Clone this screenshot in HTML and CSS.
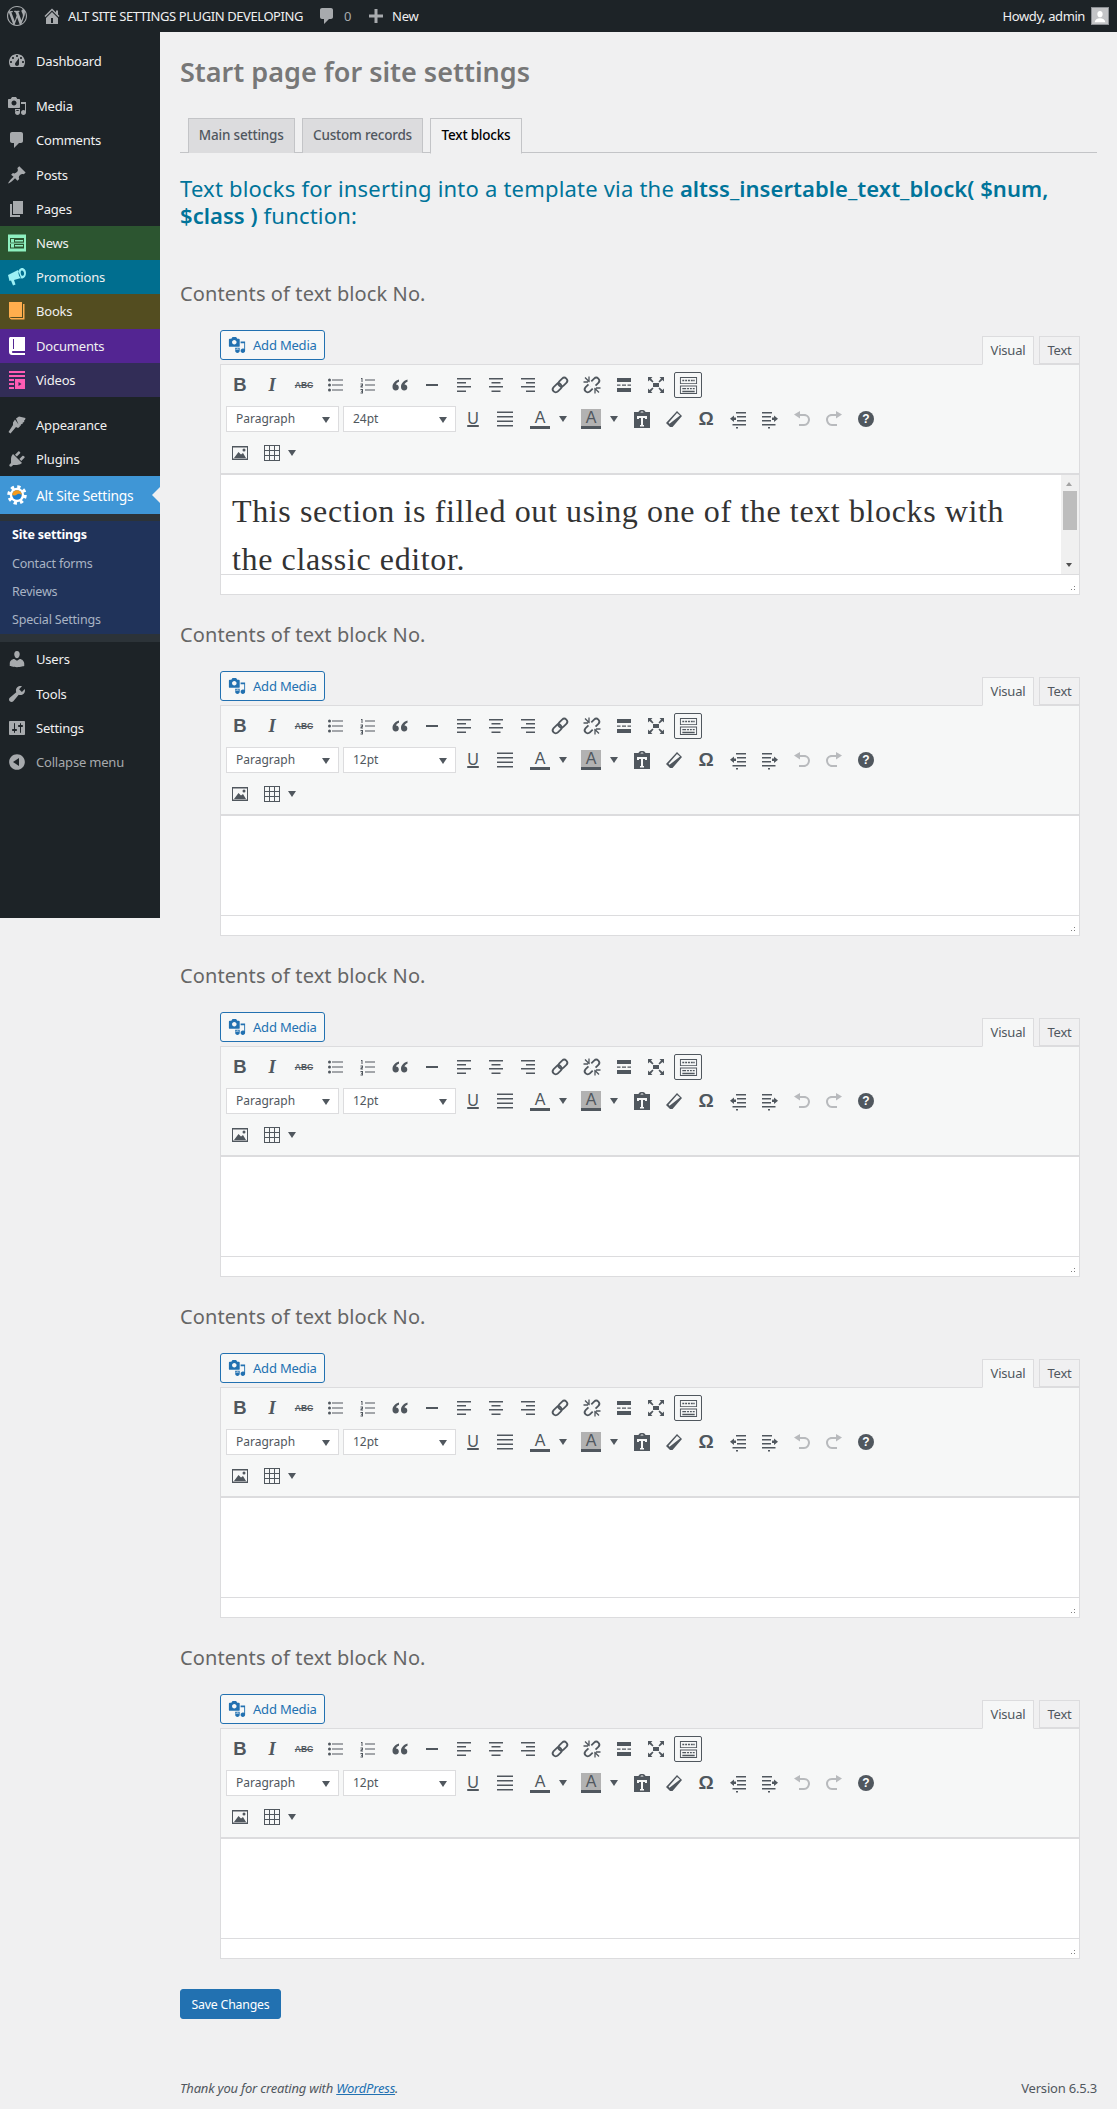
FILE: index.html
```html
<!DOCTYPE html>
<html lang="en">
<head>
<meta charset="utf-8">
<title>Start page for site settings</title>
<link rel="stylesheet" href="styles.css">
</head>
<body>
<svg class="defs" xmlns="http://www.w3.org/2000/svg">
<symbol id="wp" viewBox="0 0 20 20"><path d="M20 10c0-5.510-4.490-10-10-10C4.480 0 0 4.490 0 10c0 5.520 4.480 10 10 10 5.510 0 10-4.480 10-10zM7.780 15.370L4.370 6.220c.55-.02 1.170-.08 1.170-.08.5-.06.44-1.130-.06-1.110 0 0-1.450.11-2.370.11-.18 0-.37 0-.58-.01C4.120 2.690 6.870 1.110 10 1.110c2.330 0 4.450.87 6.050 2.340-.68-.11-1.650.39-1.650 1.580 0 .74.45 1.360.9 2.100.35.61.55 1.360.55 2.460 0 1.490-1.400 5-1.400 5l-3.030-8.370c.54-.02.82-.17.82-.17.5-.05.44-1.250-.06-1.220 0 0-1.440.12-2.380.12-.87 0-2.330-.12-2.330-.12-.5-.03-.56 1.200-.06 1.220l.92.08 1.260 3.410zM17.410 10c.24-.64.74-1.870.43-4.250.7 1.290 1.050 2.710 1.050 4.250 0 3.290-1.730 6.240-4.400 7.780.97-2.590 1.940-5.200 2.920-7.780zM6.100 18.090C3.120 16.650 1.110 13.530 1.110 10c0-1.300.23-2.480.72-3.590C3.250 10.300 4.670 14.200 6.100 18.090zm4.030-6.630l2.580 6.980c-.86.29-1.760.45-2.710.45-.79 0-1.570-.11-2.290-.33.81-2.380 1.620-4.740 2.420-7.100z"/></symbol>
<symbol id="home" viewBox="0 0 20 20"><path d="M16 8.500l1.530 1.530-1.060 1.060L10 4.620l-6.470 6.470-1.060-1.060L10 2.500l4 4v-2h2v4zm-6-2.460l6 5.990V18H4v-6.020zM11 17v-5H9v5h2z"/></symbol>
<symbol id="comment" viewBox="0 0 20 20"><path d="M5 2h9c1.100 0 2 .9 2 2v7c0 1.100-.9 2-2 2h-2l-5 5v-5H5c-1.100 0-2-.9-2-2V4c0-1.100.9-2 2-2z"/></symbol>
<symbol id="plus" viewBox="0 0 20 20"><path d="M17 8.500v3h-5.500V17h-3v-5.500H3v-3h5.500V3h3v5.500z"/></symbol>
<symbol id="dash" viewBox="0 0 20 20"><path fill-rule="evenodd" d="M3.760 16h12.480c1.100-1.370 1.760-3.110 1.760-5 0-4.420-3.580-8-8-8s-8 3.580-8 8c0 1.890.66 3.630 1.760 5zM10 4c.55 0 1 .45 1 1s-.45 1-1 1-1-.45-1-1 .45-1 1-1zM6 6c.55 0 1 .45 1 1s-.45 1-1 1-1-.45-1-1 .45-1 1-1zm8 0c.55 0 1 .45 1 1s-.45 1-1 1-1-.45-1-1 .45-1 1-1zm-5.370 5.550L12 7v6c0 1.100-.9 2-2 2s-2-.9-2-2c0-.57.24-1.080.63-1.450zM4 10c.55 0 1 .45 1 1s-.45 1-1 1-1-.45-1-1 .45-1 1-1zm12 0c.55 0 1 .45 1 1s-.45 1-1 1-1-.45-1-1 .45-1 1-1z"/></symbol>
<symbol id="media" viewBox="0 0 20 20"><path fill-rule="evenodd" d="M13 11V4c0-.55-.45-1-1-1h-1.670L9 1H5L3.670 3H2c-.55 0-1 .45-1 1v7c0 .55.45 1 1 1h10c.55 0 1-.45 1-1zM7 4.500c1.380 0 2.500 1.120 2.500 2.500S8.380 9.500 7 9.500 4.500 8.380 4.500 7 5.620 4.500 7 4.500zM14 6h5v10.500c0 1.380-1.120 2.500-2.500 2.500S14 17.880 14 16.500s1.120-2.500 2.500-2.500c.57 0 1.100.2 1.500.5V8h-4zm-6 7h5v3.500c0 1.380-1.120 2.500-2.500 2.500S8 17.880 8 16.500 9.120 14 10.500 14c.57 0 1.100.2 1.500.5V15H8z"/></symbol>
<symbol id="pin" viewBox="0 0 20 20"><path d="M10.440 3.020l1.820-1.820 6.360 6.350-1.830 1.820c-1.050-.68-2.480-.57-3.410.36l-.75.75c-.92.93-1.040 2.350-.35 3.410l-1.830 1.820-2.410-2.410-2.800 2.790c-.42.42-3.380 2.710-3.800 2.290s1.860-3.390 2.280-3.810l2.790-2.790L4.100 9.780l1.830-1.820c1.050.69 2.480.57 3.400-.36l.75-.75c.93-.92 1.050-2.350.36-3.400z"/></symbol>
<symbol id="pages" viewBox="0 0 20 20"><path d="M6 15V2h10v13H6zm-1 1h8v2H3V5h2v11z"/></symbol>
<symbol id="brush" viewBox="0 0 20 20"><path d="M9 3.500l3-2 6.500 1.500-.5 2-1 .5.300 1.500-1.500.4-.3 1.600-1.500.2-.5 1.800-1.500-.5zM8 4.500l5 7-2 1.500-2-1L3.500 18.500 1.500 17 6 10 6 7.500z"/></symbol>
<symbol id="plug" viewBox="0 0 20 20"><path d="M13.110 4.360L9.870 7.600 8 5.730l3.240-3.240c.35-.34 1.050-.2 1.560.32.520.51.66 1.210.31 1.550zm-8 1.770l.91-1.120 9.010 9.010-1.190.84c-.71.71-2.630 1.160-3.820 1.160H6.140L4.900 17.260c-.59.59-1.540.59-2.120 0-.59-.58-.59-1.530 0-2.120l1.240-1.240v-3.880c0-1.130.4-3.050 1.110-3.890zm7.260 3.970l3.240-3.240c.34-.35 1.040-.21 1.550.31.52.51.66 1.210.31 1.550l-3.240 3.250z"/></symbol>
<symbol id="user" viewBox="0 0 20 20"><path d="M10 9.250c-2.270 0-2.730-3.440-2.730-3.440C7 4.020 7.820 2 9.970 2c2.160 0 2.980 2.020 2.710 3.810 0 0-.41 3.440-2.680 3.440zm0 2.570L12.720 10c2.390 0 4.520 2.330 4.520 4.530v2.490s-3.650 1.130-7.240 1.130c-3.650 0-7.240-1.130-7.240-1.130v-2.490c0-2.250 1.940-4.480 4.470-4.480z"/></symbol>
<symbol id="wrench" viewBox="0 0 20 20"><path d="M16.680 9.770c-1.340 1.340-3.300 1.670-4.950.99l-5.410 6.520c-.99.99-2.590.99-3.570 0-.99-.98-.99-2.580 0-3.570l6.520-5.420c-.68-1.650-.35-3.610.99-4.950 1.280-1.280 3.120-1.620 4.720-1.060l-2.890 2.890 2.820 2.820 2.860-2.870c.53 1.580.18 3.400-1.090 4.670z"/></symbol>
<symbol id="sliders" viewBox="0 0 20 20"><path fill-rule="evenodd" d="M18 16V4c0-.55-.45-1-1-1H3c-.55 0-1 .45-1 1v12c0 .55.45 1 1 1h14c.55 0 1-.45 1-1zM8 11h1c.55 0 1 .45 1 1s-.45 1-1 1H8v1.500c0 .28-.22.5-.5.5s-.5-.22-.5-.5V13H6c-.55 0-1-.45-1-1s.45-1 1-1h1V5.500c0-.28.22-.5.5-.5s.5.22.5.5V11zm5-2h-1c-.55 0-1-.45-1-1s.45-1 1-1h1V5.500c0-.28.22-.5.5-.5s.5.22.5.5V7h1c.55 0 1 .45 1 1s-.45 1-1 1h-1v5.500c0 .28-.22.5-.5.5s-.5-.22-.5-.5V9z"/></symbol>
<symbol id="collapse" viewBox="0 0 20 20"><path fill-rule="evenodd" d="M10 2.160c4.330 0 7.840 3.510 7.840 7.840s-3.510 7.840-7.840 7.840-7.840-3.510-7.840-7.840S5.670 2.160 10 2.160zm2 11.840V6l-6 4z"/></symbol>
<symbol id="news" viewBox="0 0 20 20"><path fill="#8ef0c0" fill-rule="evenodd" d="M1 1.500h18v17H1zM3 5v10.500h14V5zM4 6h3v3.500H4zM8 7h8v1.500H8zM4 11h3v3.500H4zM8 12h8v1.500H8z"/><path fill="#8ef0c0" d="M3 9.700h14v1H3z"/></symbol>
<symbol id="promo" viewBox="0 0 20 20"><path fill="#9cf0f5" fill-rule="evenodd" d="M1 8l10-5 3 8-7 2 1.500 4.500-2.500 1L4 13.500l-1.500.5zM14.500 1c2.500-.5 4.500 2 4.500 5s-1.500 5-3.500 5.500c-2 .3-3.500-2-4-5S12.500 1.500 14.500 1zm.3 2.500c-1 .2-1.300 1.500-1 3s1 2.500 2 2.300 1.500-1.500 1.200-3-1.200-2.500-2.200-2.300z"/></symbol>
<symbol id="book" viewBox="0 0 20 20"><path fill="#ffae4d" d="M2 1h13v15H5c-1.700 0-3 1-3 1zM16 3h1.500v15.500H4.500c-1-.2-1.700-.7-1.800-1.200.5-.4 1.500-.3 2.300-.3H16z"/></symbol>
<symbol id="doc" viewBox="0 0 20 20"><path fill="#fff" fill-rule="evenodd" d="M3 1h15v14H6c-1.500 0-1.500 2 0 2h12v2H5c-1.500 0-3-1-3-3V3c0-1 .5-2 1-2zM6 3v10h1V3z"/></symbol>
<symbol id="video" viewBox="0 0 20 20"><path fill="#ff5cb4" fill-rule="evenodd" d="M2 1h16v2H2zM2 5h16v2H2zM2 9h5v2H2zM2 13h5v2H2zM2 17h5v2H2zM8 9h10v10H8zM11.500 12v4l3-2z"/></symbol>
<symbol id="ul" viewBox="0 0 20 20"><path d="M6 4.500h11v1H6zM6 9.500h11v1H6zM6 14.500h11v1H6z"/><circle cx="3.500" cy="5" r="1.500"/><circle cx="3.500" cy="10" r="1.500"/><circle cx="3.500" cy="15" r="1.500"/></symbol>
<symbol id="ol" viewBox="0 0 20 20"><path d="M7 4.500h10v1H7zM7 9.500h10v1H7zM7 14.500h10v1H7zM3 3h1.500v4h-1V4H3zM2.500 8.500H5v2.200l-1.500.8H5v1H2.500v-1.800l1.500-.8v-.4H2.500zM2.500 14H5v4.500H2.500v-1H4V17H3v-.8h1v-1H2.500z"/></symbol>
<symbol id="quote" viewBox="0 0 20 20"><path d="M9 4.500C5.500 5.500 2.500 8 2.500 12c0 2.200 1.300 3.500 3.200 3.500 1.800 0 3.100-1.300 3.100-3s-1.200-2.800-2.800-2.900C6.200 8.200 7.300 7.300 9 6.700zM17.500 4.500C14 5.500 11 8 11 12c0 2.200 1.300 3.500 3.200 3.500 1.800 0 3.100-1.300 3.100-3s-1.200-2.800-2.800-2.900c.2-1.400 1.300-2.300 3-2.900z"/></symbol>
<symbol id="hr" viewBox="0 0 20 20"><path d="M4 9h12v2H4z"/></symbol>
<symbol id="al" viewBox="0 0 20 20"><path d="M3 3h14v1.500H3zM3 7h9v1.500H3zM3 11h14v1.500H3zM3 15.500h9V17H3z"/></symbol>
<symbol id="ac" viewBox="0 0 20 20"><path d="M3 3h14v1.500H3zM5.500 7h9v1.500h-9zM3 11h14v1.500H3zM5.500 15.500h9V17h-9z"/></symbol>
<symbol id="ar" viewBox="0 0 20 20"><path d="M3 3h14v1.500H3zM8 7h9v1.500H8zM3 11h14v1.500H3zM8 15.500h9V17H8z"/></symbol>
<symbol id="link" viewBox="0 0 20 20"><g fill="none" stroke="currentColor" stroke-width="1.800"><rect x="1" y="7" width="10" height="6" rx="3" transform="rotate(-45 10 10)"/><rect x="9" y="7" width="10" height="6" rx="3" transform="rotate(-45 10 10)"/></g></symbol>
<symbol id="unlink" viewBox="0 0 20 20"><g fill="none" stroke="currentColor" stroke-width="1.800"><rect x="1" y="7" width="10" height="6" rx="3" transform="rotate(-45 10 10)"/><rect x="9" y="7" width="10" height="6" rx="3" transform="rotate(-45 10 10)"/></g><path fill="none" stroke="#f6f7f7" stroke-width="4" d="M4.500 4.500L15.500 15.500"/><path fill="none" stroke="currentColor" stroke-width="1.300" d="M3 2.500L7.500 7M1.500 7H6M7 1.500V6M17 17.500L12.500 13M18.500 13H14M13 18.500V14"/></symbol>
<symbol id="more" viewBox="0 0 20 20"><path d="M3 3h14v4H3zM3 13h14v4H3zM3 9.500h3.500v1.200H3zM8 9.500h4v1.200H8zM13.500 9.500H17v1.200h-3.500z"/></symbol>
<symbol id="full" viewBox="0 0 20 20"><path d="M7 8h6v4H7zM2 2h4.500L5 3.500 7.500 6.500 6.500 7.500 3.500 5 2 6.500zM18 2h-4.500L15 3.500l-2.500 3 1 1 3-2.500L18 6.500zM2 18h4.500L5 16.500l2.500-3-1-1-3 2.500L2 13.500zM18 18h-4.500l1.500-1.500-2.500-3 1-1 3 2.500 1.500-1.500z"/></symbol>
<symbol id="kitchen" viewBox="0 0 20 20"><path fill-rule="evenodd" d="M1 1h18v7.500H1zM2 2v5.500h16V2zM1 10h18v9H1zM2 11v7h16v-7z"/><path d="M3.500 4h2v1.500h-2zM6.500 4h2v1.500h-2zM9.500 4h2v1.500h-2zM12.500 4h2v1.500h-2zM15 4h1.500v1.500H15zM3.500 12.500h4V14h-4zM8.500 12.500h2V14h-2zM11.500 12.500h2V14h-2zM14.500 12.500h2V14h-2zM3.500 15.500h13V17h-13z"/></symbol>
<symbol id="just" viewBox="0 0 20 20"><path d="M2 2.500h16V4H2zM2 7h16v1.500H2zM2 11.500h16V13H2zM2 16h16v1.500H2z"/></symbol>
<symbol id="paste" viewBox="0 0 20 20"><path fill-rule="evenodd" d="M2 3h4.500C7 1.500 8.200 1 10 1s3 .5 3.500 2H18v16H2zM8.500 3.500h3C11.300 2.700 10.800 2.500 10 2.500s-1.300.2-1.500 1zM5 7v3h2V9h2v7H8v1.500h4V16h-1V9h2v1h2V7z"/></symbol>
<symbol id="erase" viewBox="0 0 20 20"><path fill-rule="evenodd" d="M13 2l5 5-9.500 11H6L2 14zM13 4L4.500 13.800l1 1L16 6.500z"/></symbol>
<symbol id="out" viewBox="0 0 20 20"><path d="M8 3h10v1.500H8zM9 7h9v1.500H9zM9 11h9v1.500H9zM2 9.700L6 6.500v2h2v2.500H6v2zM4.500 15h13.500v1.500H4.500zM8 18h2v1.500H8z"/></symbol>
<symbol id="ind" viewBox="0 0 20 20"><path d="M2 3h10v1.500H2zM2 7h9v1.500H2zM2 11h9v1.500H2zM18 9.700l-4-3.200v2h-2v2.500h2v2zM2 15h13.500v1.500H2zM8 18h2v1.500H8z"/></symbol>
<symbol id="undo" viewBox="0 0 20 20"><path d="M2 5.500L8 2v3h4c3.500 0 6 2.500 6 5.500S15.500 17 12 17H7v-2h5c2.300 0 4-2 4-4.500S14.300 7 12 7H8v2.500z"/></symbol>
<symbol id="redo" viewBox="0 0 20 20"><path d="M18 5.500L12 2v3H8C4.500 5 2 7.500 2 10.500S4.500 17 8 17h5v-2H8c-2.300 0-4-2-4-4.500S5.700 7 8 7h4v2.500z"/></symbol>
<symbol id="img" viewBox="0 0 20 20"><path fill-rule="evenodd" d="M2 3h16v14H2zM3 4.500v11h14v-11z"/><path d="M4 15l4.500-6 2.500 2.500 2-1.500 3 5zM14 5.500a1.500 1.500 0 1 1 0 3 1.500 1.500 0 0 1 0-3z"/></symbol>
<symbol id="table" viewBox="0 0 20 20"><path fill-rule="evenodd" d="M2 2h16v16H2zM3 3v4h4V3zM8 3v4h4V3zM13 3v4h4V3zM3 8v4h4V8zM8 8v4h4V8zM13 8v4h4V8zM3 13v4h4v-4zM8 13v4h4v-4zM13 13v4h4v-4z"/></symbol>
</svg>

<header class="adminbar">
  <div class="bar-left">
    <svg class="bar-ic bar-wp"><use href="#wp"/></svg>
    <svg class="bar-ic bar-home"><use href="#home"/></svg>
    <span class="bar-site">ALT SITE SETTINGS PLUGIN DEVELOPING</span>
    <svg class="bar-ic bar-com"><use href="#comment"/></svg>
    <span class="bar-count">0</span>
    <svg class="bar-ic bar-plus"><use href="#plus"/></svg>
    <span class="bar-new">New</span>
  </div>
  <div class="bar-right">
    <span class="bar-howdy">Howdy, admin</span>
    <span class="avatar"><svg viewBox="0 0 18 18"><path d="M9 3.500c2 0 3 1.500 3 3.500s-1.300 3.500-3 3.500S6 9 6 7s1-3.500 3-3.500zM3 16c.3-3 2.800-4.500 6-4.500s5.700 1.500 6 4.500z"/></svg></span>
  </div>
</header>

<div class="wrap">
  <nav class="sidebar">
    <ul class="menu">
      <li class="mi"><svg class="mi-ic"><use href="#dash"/></svg>Dashboard</li>
      <li class="sep"></li>
      <li class="mi"><svg class="mi-ic"><use href="#media"/></svg>Media</li>
      <li class="mi"><svg class="mi-ic"><use href="#comment"/></svg>Comments</li>
      <li class="mi"><svg class="mi-ic"><use href="#pin"/></svg>Posts</li>
      <li class="mi"><svg class="mi-ic"><use href="#pages"/></svg>Pages</li>
      <li class="mi c-news"><svg class="mi-ic"><use href="#news"/></svg>News</li>
      <li class="mi c-promo"><svg class="mi-ic"><use href="#promo"/></svg>Promotions</li>
      <li class="mi c-books"><svg class="mi-ic"><use href="#book"/></svg>Books</li>
      <li class="mi c-docs"><svg class="mi-ic"><use href="#doc"/></svg>Documents</li>
      <li class="mi c-video"><svg class="mi-ic"><use href="#video"/></svg>Videos</li>
      <li class="sep"></li>
      <li class="mi"><svg class="mi-ic"><use href="#brush"/></svg>Appearance</li>
      <li class="mi"><svg class="mi-ic"><use href="#plug"/></svg>Plugins</li>
      <li class="mi current">
        <svg class="mi-ic gear" viewBox="0 0 20 20"><circle cx="10" cy="10" r="8" fill="none" stroke="#fff" stroke-width="3.500" stroke-dasharray="3.200 3.080"/><circle cx="10" cy="10" r="7.200" fill="#fff"/><circle cx="10" cy="10" r="4.800" fill="#1c7fd0"/><path d="M5.200 10a4.800 4.800 0 0 1 9.600 0c-2-1.500-4-1.500-4.800-.6-1.200 1-3 1.300-4.800.6z" fill="#f59a1b"/></svg>
        Alt Site Settings
      </li>
      <li class="submenu">
        <ul class="sublist">
          <li class="si si-on">Site settings</li>
          <li class="si">Contact forms</li>
          <li class="si">Reviews</li>
          <li class="si">Special Settings</li>
        </ul>
      </li>
      <li class="mi"><svg class="mi-ic"><use href="#user"/></svg>Users</li>
      <li class="mi"><svg class="mi-ic"><use href="#wrench"/></svg>Tools</li>
      <li class="mi"><svg class="mi-ic"><use href="#sliders"/></svg>Settings</li>
      <li class="mi mi-dim"><svg class="mi-ic"><use href="#collapse"/></svg>Collapse menu</li>
    </ul>
  </nav>

  <main class="main">
    <h1 class="title">Start page for site settings</h1>
    <div class="navtabs">
      <span class="navtab nt-main">Main settings</span>
      <span class="navtab nt-custom">Custom records</span>
      <span class="navtab navtab-on">Text blocks</span>
    </div>
    <h2 class="lead">Text blocks for inserting into a template via the <b>altss_insertable_text_block( $num, $class )</b> function:</h2>

    <section class="block">
      <h3 class="label">Contents of text block No.</h3>
      <div class="editor">
        <div class="ed-head">
          <button class="addmedia"><svg class="am-ic"><use href="#media"/></svg>Add Media</button>
          <div class="ed-tabs"><span class="ed-tab ed-tab-on">Visual</span><span class="ed-tab">Text</span></div>
        </div>
        <div class="toolbar">
          <div class="row">
            <span class="tb t-b">B</span><span class="tb t-i">I</span><span class="tb t-abc">ABC</span>
            <span class="tb"><svg class="ic"><use href="#ul"/></svg></span><span class="tb"><svg class="ic"><use href="#ol"/></svg></span><span class="tb"><svg class="ic"><use href="#quote"/></svg></span><span class="tb"><svg class="ic"><use href="#hr"/></svg></span>
            <span class="tb"><svg class="ic"><use href="#al"/></svg></span><span class="tb"><svg class="ic"><use href="#ac"/></svg></span><span class="tb"><svg class="ic"><use href="#ar"/></svg></span>
            <span class="tb"><svg class="ic"><use href="#link"/></svg></span><span class="tb"><svg class="ic"><use href="#unlink"/></svg></span><span class="tb"><svg class="ic"><use href="#more"/></svg></span><span class="tb"><svg class="ic"><use href="#full"/></svg></span>
            <span class="tb tb-on"><svg class="ic"><use href="#kitchen"/></svg></span>
          </div>
          <div class="row">
            <span class="sel">Paragraph</span><span class="sel sel-2">24pt</span>
            <span class="tb t-u">U</span><span class="tb"><svg class="ic"><use href="#just"/></svg></span>
            <span class="split t-a">A</span><span class="caret-box"></span><span class="split t-a t-a2">A</span><span class="caret-box"></span>
            <span class="tb tb-paste"><svg class="ic"><use href="#paste"/></svg></span><span class="tb"><svg class="ic"><use href="#erase"/></svg></span><span class="tb t-o">Ω</span>
            <span class="tb"><svg class="ic"><use href="#out"/></svg></span><span class="tb"><svg class="ic"><use href="#ind"/></svg></span>
            <span class="tb tb-off"><svg class="ic"><use href="#undo"/></svg></span><span class="tb tb-off"><svg class="ic"><use href="#redo"/></svg></span>
            <span class="tb"><span class="help">?</span></span>
          </div>
          <div class="row">
            <span class="tb"><svg class="ic"><use href="#img"/></svg></span><span class="tb"><svg class="ic"><use href="#table"/></svg></span><span class="caret-box caret-sm"></span>
          </div>
        </div>
        <div class="edit edit-filled">
          <p class="edit-text">This section is filled out using one of the text blocks with the classic editor.</p>
          <div class="scroll"><span class="sc-up"></span><span class="sc-thumb"></span><span class="sc-down"></span></div>
        </div>
        <div class="status"><span class="grip"></span></div>
      </div>
    </section>

    <section class="block">
      <h3 class="label">Contents of text block No.</h3>
      <div class="editor">
        <div class="ed-head">
          <button class="addmedia"><svg class="am-ic"><use href="#media"/></svg>Add Media</button>
          <div class="ed-tabs"><span class="ed-tab ed-tab-on">Visual</span><span class="ed-tab">Text</span></div>
        </div>
        <div class="toolbar">
          <div class="row">
            <span class="tb t-b">B</span><span class="tb t-i">I</span><span class="tb t-abc">ABC</span>
            <span class="tb"><svg class="ic"><use href="#ul"/></svg></span><span class="tb"><svg class="ic"><use href="#ol"/></svg></span><span class="tb"><svg class="ic"><use href="#quote"/></svg></span><span class="tb"><svg class="ic"><use href="#hr"/></svg></span>
            <span class="tb"><svg class="ic"><use href="#al"/></svg></span><span class="tb"><svg class="ic"><use href="#ac"/></svg></span><span class="tb"><svg class="ic"><use href="#ar"/></svg></span>
            <span class="tb"><svg class="ic"><use href="#link"/></svg></span><span class="tb"><svg class="ic"><use href="#unlink"/></svg></span><span class="tb"><svg class="ic"><use href="#more"/></svg></span><span class="tb"><svg class="ic"><use href="#full"/></svg></span>
            <span class="tb tb-on"><svg class="ic"><use href="#kitchen"/></svg></span>
          </div>
          <div class="row">
            <span class="sel">Paragraph</span><span class="sel sel-2">12pt</span>
            <span class="tb t-u">U</span><span class="tb"><svg class="ic"><use href="#just"/></svg></span>
            <span class="split t-a">A</span><span class="caret-box"></span><span class="split t-a t-a2">A</span><span class="caret-box"></span>
            <span class="tb tb-paste"><svg class="ic"><use href="#paste"/></svg></span><span class="tb"><svg class="ic"><use href="#erase"/></svg></span><span class="tb t-o">Ω</span>
            <span class="tb"><svg class="ic"><use href="#out"/></svg></span><span class="tb"><svg class="ic"><use href="#ind"/></svg></span>
            <span class="tb tb-off"><svg class="ic"><use href="#undo"/></svg></span><span class="tb tb-off"><svg class="ic"><use href="#redo"/></svg></span>
            <span class="tb"><span class="help">?</span></span>
          </div>
          <div class="row">
            <span class="tb"><svg class="ic"><use href="#img"/></svg></span><span class="tb"><svg class="ic"><use href="#table"/></svg></span><span class="caret-box caret-sm"></span>
          </div>
        </div>
        <div class="edit"></div>
        <div class="status"><span class="grip"></span></div>
      </div>
    </section>

    <section class="block">
      <h3 class="label">Contents of text block No.</h3>
      <div class="editor">
        <div class="ed-head">
          <button class="addmedia"><svg class="am-ic"><use href="#media"/></svg>Add Media</button>
          <div class="ed-tabs"><span class="ed-tab ed-tab-on">Visual</span><span class="ed-tab">Text</span></div>
        </div>
        <div class="toolbar">
          <div class="row">
            <span class="tb t-b">B</span><span class="tb t-i">I</span><span class="tb t-abc">ABC</span>
            <span class="tb"><svg class="ic"><use href="#ul"/></svg></span><span class="tb"><svg class="ic"><use href="#ol"/></svg></span><span class="tb"><svg class="ic"><use href="#quote"/></svg></span><span class="tb"><svg class="ic"><use href="#hr"/></svg></span>
            <span class="tb"><svg class="ic"><use href="#al"/></svg></span><span class="tb"><svg class="ic"><use href="#ac"/></svg></span><span class="tb"><svg class="ic"><use href="#ar"/></svg></span>
            <span class="tb"><svg class="ic"><use href="#link"/></svg></span><span class="tb"><svg class="ic"><use href="#unlink"/></svg></span><span class="tb"><svg class="ic"><use href="#more"/></svg></span><span class="tb"><svg class="ic"><use href="#full"/></svg></span>
            <span class="tb tb-on"><svg class="ic"><use href="#kitchen"/></svg></span>
          </div>
          <div class="row">
            <span class="sel">Paragraph</span><span class="sel sel-2">12pt</span>
            <span class="tb t-u">U</span><span class="tb"><svg class="ic"><use href="#just"/></svg></span>
            <span class="split t-a">A</span><span class="caret-box"></span><span class="split t-a t-a2">A</span><span class="caret-box"></span>
            <span class="tb tb-paste"><svg class="ic"><use href="#paste"/></svg></span><span class="tb"><svg class="ic"><use href="#erase"/></svg></span><span class="tb t-o">Ω</span>
            <span class="tb"><svg class="ic"><use href="#out"/></svg></span><span class="tb"><svg class="ic"><use href="#ind"/></svg></span>
            <span class="tb tb-off"><svg class="ic"><use href="#undo"/></svg></span><span class="tb tb-off"><svg class="ic"><use href="#redo"/></svg></span>
            <span class="tb"><span class="help">?</span></span>
          </div>
          <div class="row">
            <span class="tb"><svg class="ic"><use href="#img"/></svg></span><span class="tb"><svg class="ic"><use href="#table"/></svg></span><span class="caret-box caret-sm"></span>
          </div>
        </div>
        <div class="edit"></div>
        <div class="status"><span class="grip"></span></div>
      </div>
    </section>

    <section class="block">
      <h3 class="label">Contents of text block No.</h3>
      <div class="editor">
        <div class="ed-head">
          <button class="addmedia"><svg class="am-ic"><use href="#media"/></svg>Add Media</button>
          <div class="ed-tabs"><span class="ed-tab ed-tab-on">Visual</span><span class="ed-tab">Text</span></div>
        </div>
        <div class="toolbar">
          <div class="row">
            <span class="tb t-b">B</span><span class="tb t-i">I</span><span class="tb t-abc">ABC</span>
            <span class="tb"><svg class="ic"><use href="#ul"/></svg></span><span class="tb"><svg class="ic"><use href="#ol"/></svg></span><span class="tb"><svg class="ic"><use href="#quote"/></svg></span><span class="tb"><svg class="ic"><use href="#hr"/></svg></span>
            <span class="tb"><svg class="ic"><use href="#al"/></svg></span><span class="tb"><svg class="ic"><use href="#ac"/></svg></span><span class="tb"><svg class="ic"><use href="#ar"/></svg></span>
            <span class="tb"><svg class="ic"><use href="#link"/></svg></span><span class="tb"><svg class="ic"><use href="#unlink"/></svg></span><span class="tb"><svg class="ic"><use href="#more"/></svg></span><span class="tb"><svg class="ic"><use href="#full"/></svg></span>
            <span class="tb tb-on"><svg class="ic"><use href="#kitchen"/></svg></span>
          </div>
          <div class="row">
            <span class="sel">Paragraph</span><span class="sel sel-2">12pt</span>
            <span class="tb t-u">U</span><span class="tb"><svg class="ic"><use href="#just"/></svg></span>
            <span class="split t-a">A</span><span class="caret-box"></span><span class="split t-a t-a2">A</span><span class="caret-box"></span>
            <span class="tb tb-paste"><svg class="ic"><use href="#paste"/></svg></span><span class="tb"><svg class="ic"><use href="#erase"/></svg></span><span class="tb t-o">Ω</span>
            <span class="tb"><svg class="ic"><use href="#out"/></svg></span><span class="tb"><svg class="ic"><use href="#ind"/></svg></span>
            <span class="tb tb-off"><svg class="ic"><use href="#undo"/></svg></span><span class="tb tb-off"><svg class="ic"><use href="#redo"/></svg></span>
            <span class="tb"><span class="help">?</span></span>
          </div>
          <div class="row">
            <span class="tb"><svg class="ic"><use href="#img"/></svg></span><span class="tb"><svg class="ic"><use href="#table"/></svg></span><span class="caret-box caret-sm"></span>
          </div>
        </div>
        <div class="edit"></div>
        <div class="status"><span class="grip"></span></div>
      </div>
    </section>

    <section class="block">
      <h3 class="label">Contents of text block No.</h3>
      <div class="editor">
        <div class="ed-head">
          <button class="addmedia"><svg class="am-ic"><use href="#media"/></svg>Add Media</button>
          <div class="ed-tabs"><span class="ed-tab ed-tab-on">Visual</span><span class="ed-tab">Text</span></div>
        </div>
        <div class="toolbar">
          <div class="row">
            <span class="tb t-b">B</span><span class="tb t-i">I</span><span class="tb t-abc">ABC</span>
            <span class="tb"><svg class="ic"><use href="#ul"/></svg></span><span class="tb"><svg class="ic"><use href="#ol"/></svg></span><span class="tb"><svg class="ic"><use href="#quote"/></svg></span><span class="tb"><svg class="ic"><use href="#hr"/></svg></span>
            <span class="tb"><svg class="ic"><use href="#al"/></svg></span><span class="tb"><svg class="ic"><use href="#ac"/></svg></span><span class="tb"><svg class="ic"><use href="#ar"/></svg></span>
            <span class="tb"><svg class="ic"><use href="#link"/></svg></span><span class="tb"><svg class="ic"><use href="#unlink"/></svg></span><span class="tb"><svg class="ic"><use href="#more"/></svg></span><span class="tb"><svg class="ic"><use href="#full"/></svg></span>
            <span class="tb tb-on"><svg class="ic"><use href="#kitchen"/></svg></span>
          </div>
          <div class="row">
            <span class="sel">Paragraph</span><span class="sel sel-2">12pt</span>
            <span class="tb t-u">U</span><span class="tb"><svg class="ic"><use href="#just"/></svg></span>
            <span class="split t-a">A</span><span class="caret-box"></span><span class="split t-a t-a2">A</span><span class="caret-box"></span>
            <span class="tb tb-paste"><svg class="ic"><use href="#paste"/></svg></span><span class="tb"><svg class="ic"><use href="#erase"/></svg></span><span class="tb t-o">Ω</span>
            <span class="tb"><svg class="ic"><use href="#out"/></svg></span><span class="tb"><svg class="ic"><use href="#ind"/></svg></span>
            <span class="tb tb-off"><svg class="ic"><use href="#undo"/></svg></span><span class="tb tb-off"><svg class="ic"><use href="#redo"/></svg></span>
            <span class="tb"><span class="help">?</span></span>
          </div>
          <div class="row">
            <span class="tb"><svg class="ic"><use href="#img"/></svg></span><span class="tb"><svg class="ic"><use href="#table"/></svg></span><span class="caret-box caret-sm"></span>
          </div>
        </div>
        <div class="edit"></div>
        <div class="status"><span class="grip"></span></div>
      </div>
    </section>

    <button class="save">Save Changes</button>

    <footer class="foot">
      <em>Thank you for creating with <a class="foot-link" href="#">WordPress</a>.</em>
      <span>Version 6.5.3</span>
    </footer>
  </main>
</div>
</body>
</html>
```

FILE: styles.css
```css
* { box-sizing: border-box; }
html, body { margin: 0; padding: 0; }
body {
  height: 2109px;
  overflow: hidden;
  background: #f0f0f1;
  color: #3c434a;
  font-family: "Noto Sans", "Open Sans", sans-serif;
  font-size: 13px;
  letter-spacing: -0.2px;
}
ul { list-style: none; margin: 0; padding: 0; }
.defs { display: none; }

/* Admin bar */
.adminbar {
  height: 32px;
  background: #1d2327;
  color: #f0f0f1;
  display: flex;
  justify-content: space-between;
  align-items: center;
}
.bar-left, .bar-right { display: flex; align-items: center; height: 32px; }
.bar-ic { fill: #a7aaad; flex: none; }
.bar-wp { width: 20px; height: 20px; margin-left: 7px; }
.bar-home { width: 20px; height: 20px; margin-left: 15px; }
.bar-site { margin-left: 6px; width: 234px; white-space: nowrap; letter-spacing: -0.41px; }
.bar-com { width: 20px; height: 20px; margin-left: 15px; }
.bar-count { margin-left: 7px; color: #a7aaad; width: 8px; }
.bar-plus { width: 20px; height: 20px; margin-left: 14px; }
.bar-new { margin-left: 6px; }
.bar-right { padding-right: 8px; gap: 6px; }
.bar-howdy { letter-spacing: -0.4px; }
.avatar {
  width: 18px;
  height: 18px;
  background: #c3c4c7;
  border: 1px solid #8c8f94;
  display: block;
}
.avatar svg { display: block; width: 16px; height: 16px; fill: #fff; }

/* Layout */
.wrap { display: flex; align-items: flex-start; }

/* Sidebar */
.sidebar {
  width: 160px;
  height: 886px;
  background: #1d2327;
  padding-top: 12px;
  flex: none;
  color: #f0f0f1;
}
.mi {
  height: 34.2px;
  display: flex;
  align-items: center;
  position: relative;
}
.mi-ic {
  width: 20px;
  height: 20px;
  margin: 0 9px 0 7px;
  fill: #a7aaad;
  flex: none;
}
.sep { height: 11px; }
.c-news { background: #2c5530; }
.c-promo { background: #006e8f; }
.c-books { background: #534d20; }
.c-docs { background: #532592; }
.c-video { background: #322d57; }
.current { height: 38px; background: #3f96d6; color: #fff; font-size: 13.8px; }
.current::after {
  content: "";
  position: absolute;
  right: 0;
  top: 50%;
  margin-top: -8px;
  border: 8px solid transparent;
  border-right-color: #f0f0f1;
  border-left-width: 0;
}
.submenu { background: #2c3338; padding: 7px 0 8px; }
.sublist { background: #20335a; }
.si { height: 28.25px; padding-left: 12px; line-height: 28px; font-size: 12.5px; color: #a9b3c4; }
.si-on { color: #fff; font-weight: 700; }
.mi-dim { color: #a7aaad; }

/* Main */
.main { flex: 1; padding: 0 20px; min-width: 0; }
.title {
  margin: 0;
  padding-top: 20px;
  height: 62px;
  font-size: 27px;
  line-height: 40px;
  font-weight: 600;
  color: #777;
  letter-spacing: 0;
}
.navtabs {
  margin-top: 24px;
  height: 35px;
  padding-left: 7.5px;
  border-bottom: 1px solid #c3c4c7;
  display: flex;
  gap: 7px;
  width: 917px;
}
.navtab {
  width: 92px;
  height: 35px;
  text-align: center;
  background: #dcdcde;
  border: 1px solid #c3c4c7;
  border-bottom: 0;
  color: #50575e;
  font-size: 13.5px;
  font-weight: 500;
  line-height: 33px;
}
.nt-main { width: 107.5px; }
.nt-custom { width: 121px; }
.navtab-on { background: #f0f0f1; color: #000; height: 36px; border-bottom: 1px solid #f0f0f1; }
.lead {
  margin: 22px 0 0;
  height: 53px;
  font-size: 22px;
  line-height: 27px;
  font-weight: 400;
  color: #00749a;
  letter-spacing: 0.2px;
}
.lead b { font-weight: 600; letter-spacing: 0.05px; }
.block:first-of-type { margin-top: 52px; }
.block { height: 341px; }
.label {
  margin: 0 0 22px;
  height: 28px;
  font-size: 20px;
  line-height: 28px;
  font-weight: 400;
  color: #666;
  letter-spacing: 0.1px;
}

/* Editor */
.editor { margin-left: 40px; width: 860px; height: 265px; display: flex; flex-direction: column; }
.ed-head { height: 34px; display: flex; justify-content: space-between; align-items: flex-start; }
.addmedia {
  height: 30px;
  width: 105px;
  padding: 0 0 0 7px;
  display: flex;
  align-items: center;
  background: #f6f7f7;
  border: 1px solid #2271b1;
  border-radius: 3px;
  color: #2271b1;
  font: inherit;
  letter-spacing: inherit;
}
.am-ic { width: 18px; height: 18px; fill: #2271b1; margin-right: 7px; }
.ed-tabs { display: flex; gap: 5px; margin-top: 6px; }
.ed-tab {
  width: 41px;
  height: 28px;
  text-align: center;
  line-height: 26px;
  background: #f0f0f1;
  border: 1px solid #dcdcde;
  color: #50575e;
  font-size: 13px;
}
.ed-tab-on { width: 52px; background: #f6f7f7; border-bottom-color: #f6f7f7; height: 29px; position: relative; }
.toolbar {
  height: 111px;
  padding: 3px 3px 0;
  background: #f6f7f7;
  border: 1px solid #dcdcde;
  border-bottom: 2px solid #dcdcde;
  color: #50575e;
}
.row { display: flex; align-items: center; height: 34px; }
.row:last-child { height: 33px; }
.tb {
  width: 28px;
  height: 26px;
  margin: 0 2px;
  display: flex;
  align-items: center;
  justify-content: center;
  flex: none;
  letter-spacing: 0;
}
.tb-on { border: 1px solid #50575e; border-radius: 2px; }
.tb-off { color: #b8babd; }
.tb-paste { margin-left: 6px; }
.ic { width: 20px; height: 20px; fill: currentColor; display: block; }
.tb-on .ic { width: 19px; height: 19px; }
.t-b { font: 700 18.5px "Liberation Sans", sans-serif; }
.t-i { font: italic 700 18.5px "Liberation Serif", serif; }
.t-abc { font: 700 8.5px "Liberation Sans", sans-serif; text-decoration: line-through; }
.t-u { font: 400 16px "Liberation Sans", sans-serif; text-decoration: underline; text-decoration-thickness: 2px; }
.t-o { font: 700 19px "Liberation Sans", sans-serif; }
.help {
  width: 16px;
  height: 16px;
  border-radius: 50%;
  background: #50575e;
  color: #fff;
  font: 700 12px/16px "Liberation Sans", sans-serif;
  text-align: center;
}
.sel {
  width: 113px;
  height: 26px;
  margin: 0 2px;
  padding-left: 9px;
  background: #fff;
  border: 1px solid #dcdcde;
  line-height: 24px;
  font-size: 12px;
  position: relative;
  flex: none;
  letter-spacing: 0;
}
.sel::after, .caret-box::after {
  content: "";
  border-top: 6px solid #50575e;
  border-left: 4px solid transparent;
  border-right: 4px solid transparent;
}
.sel::after { position: absolute; right: 8px; top: 10px; }
.sel-2 { margin-right: 1px; }
.split {
  width: 30px;
  height: 26px;
  margin-left: 4px;
  display: flex;
  align-items: center;
  justify-content: center;
  flex: none;
  font: 400 16px/20px "Liberation Sans", sans-serif;
  position: relative;
  padding-bottom: 3px;
}
.split::after { content: ""; position: absolute; left: 5px; right: 5px; bottom: 3px; height: 3px; background: #50575e; }
.t-a2 {
  margin-left: 5px;
  background: linear-gradient(#b2b2b2, #b2b2b2) 5px 3px / 20px 17px no-repeat;
}
.caret-box { width: 16px; height: 26px; display: flex; align-items: center; justify-content: center; flex: none; }
.caret-sm { width: 12px; margin-left: -2px; }

.edit { height: 99px; background: #fff; border-left: 1px solid #dcdcde; border-right: 1px solid #dcdcde; display: flex; }
.edit-filled { overflow: hidden; position: relative; }
.edit-text {
  margin: 12px 0 0 11px;
  width: 800px;
  font-family: "Liberation Serif", serif;
  font-size: 32px;
  line-height: 48px;
  letter-spacing: 0.62px;
  color: #333;
}
.scroll {
  position: absolute;
  top: 0;
  right: 0;
  bottom: 0;
  width: 18px;
  background: #f0f0f0;
}
.sc-up, .sc-down { position: absolute; left: 5px; border-left: 3.5px solid transparent; border-right: 3.5px solid transparent; }
.sc-up { top: 7px; border-bottom: 4px solid #a3a3a3; }
.sc-down { bottom: 7px; border-top: 4px solid #505050; }
.sc-thumb { position: absolute; left: 2px; right: 2px; top: 16px; height: 39px; background: #bdbdbd; }
.status {
  height: 21px;
  background: #fff;
  border: 1px solid #dcdcde;
  position: relative;
}
.grip {
  position: absolute;
  right: 2px;
  bottom: 2px;
  width: 10px;
  height: 10px;
  background: radial-gradient(circle, #808080 0.7px, transparent 1px) 0 0 / 3px 3px;
  clip-path: polygon(100% 0, 100% 100%, 0 100%);
}

/* Footer bits */
.save {
  display: block;
  margin-top: 4px;
  width: 101px;
  height: 30px;
  background: #2271b1;
  border: 1px solid #2271b1;
  border-radius: 3px;
  color: #fff;
  font: inherit;
  font-size: 12.3px;
  letter-spacing: inherit;
}
.foot {
  margin-top: 59px;
  display: flex;
  justify-content: space-between;
  color: #50575e;
  line-height: 20px;
}
.foot-link { color: #2271b1; }
```
